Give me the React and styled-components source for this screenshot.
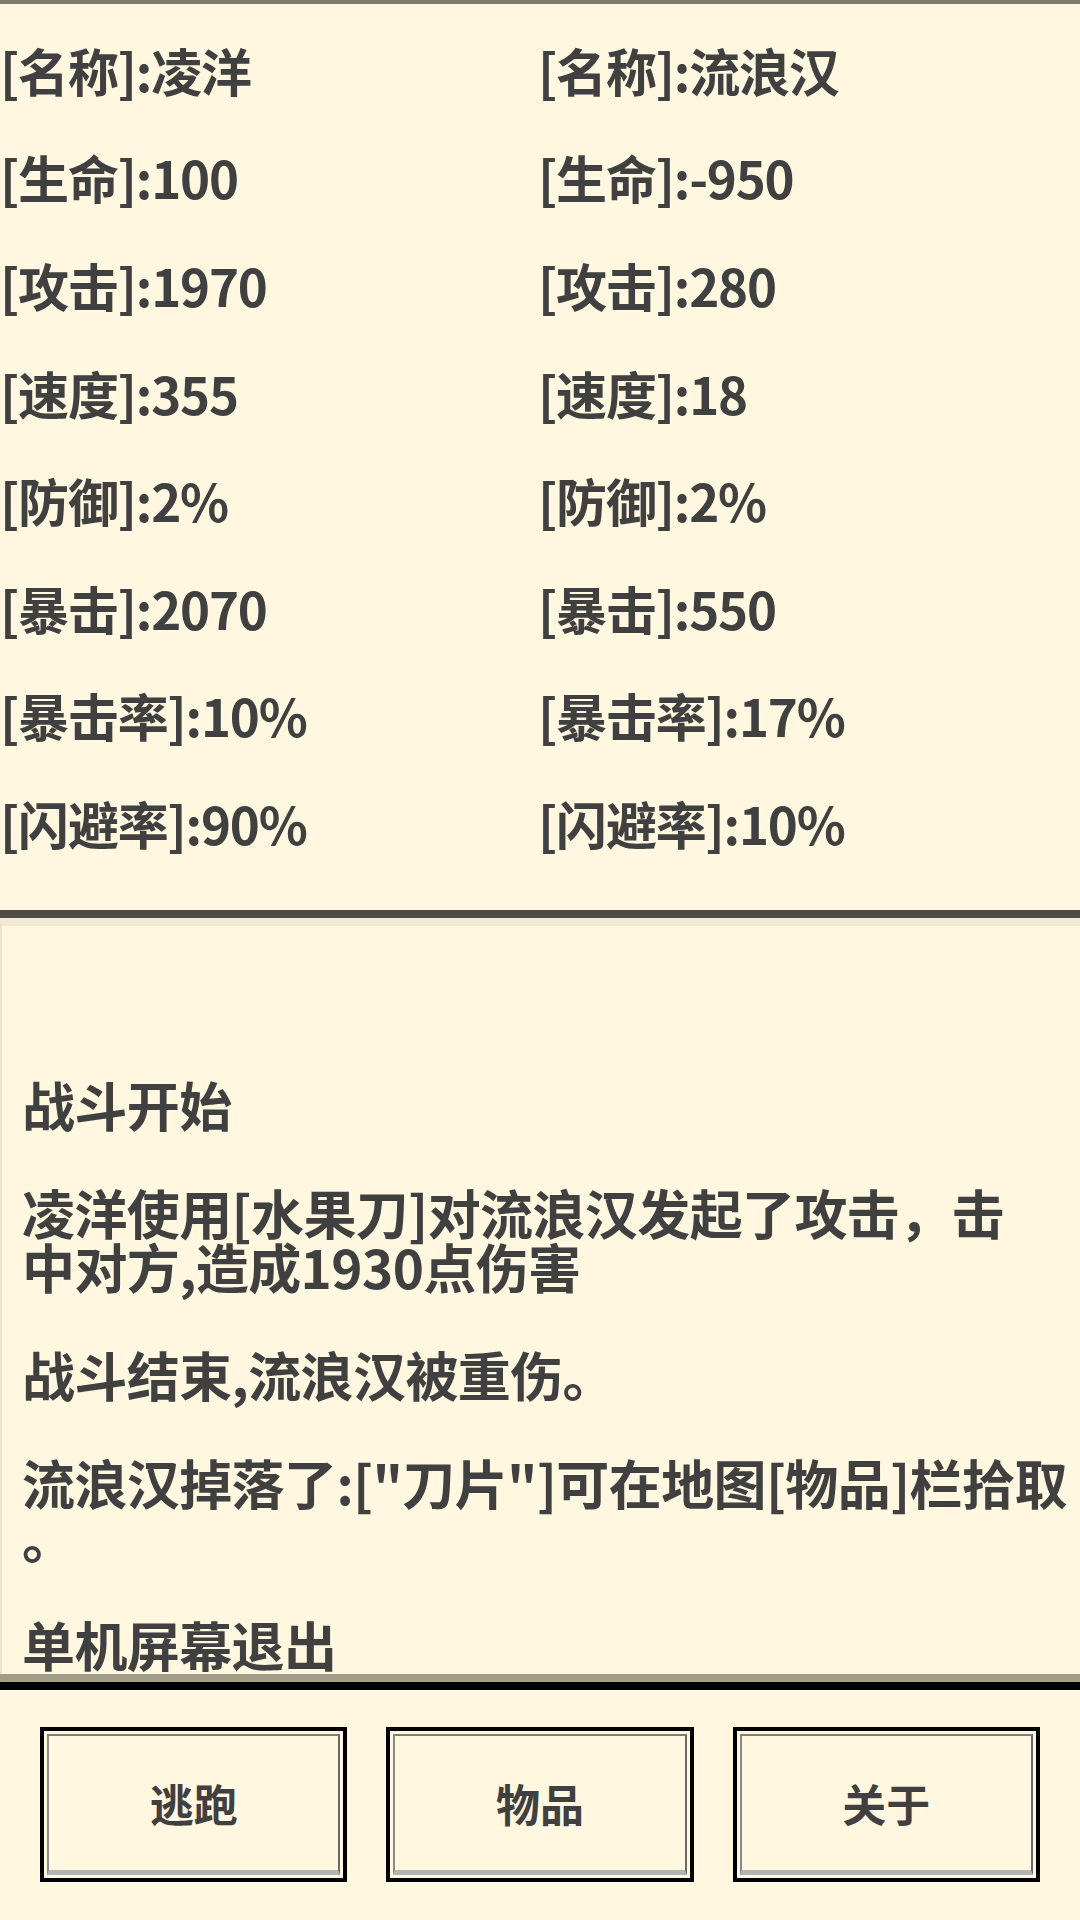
import React from 'react';
import styled, { createGlobalStyle } from 'styled-components';

const GlobalStyle = createGlobalStyle`
  html, body {
    margin: 0;
    padding: 0;
    background: #fff7e0;
  }
  body {
    font-family: "Noto Sans CJK SC", "Noto Sans", sans-serif;
    color: #404040;
  }
`;

const Page = styled.div`
  width: 1080px;
  height: 1920px;
  display: flex;
  flex-direction: column;
  background: #fff7e0;
  overflow: hidden;
`;

const TopBar = styled.div`
  height: 4px;
  background: #7f7b6c;
`;

// two columns: player on the left, enemy on the right
const StatsPanel = styled.div`
  display: grid;
  grid-template-columns: 538px 1fr;
  grid-auto-rows: 107.6px;
  align-items: center;
  padding: 12px 0 33px 0;
`;

const StatLine = styled.div`
  font-size: 51px;
  font-weight: 700;
  white-space: nowrap;
  letter-spacing: -1.2px;
`;

const Divider = styled.div`
  height: 8px;
  background: #4f4b40;
`;

const LogPanel = styled.div`
  flex: 1;
  overflow: hidden;
  border-top: 8px solid #f2ead3;
  border-left: 2px solid #ebe3cb;
  padding: 151px 20px 0 20px;
`;

const LogEntry = styled.p`
  margin: 0 0 54px 0;
  font-size: 53px;
  line-height: 54px;
  font-weight: 700;
  white-space: nowrap;
  letter-spacing: -0.6px;
`;

const BottomRule = styled.div`
  height: 8px;
  background: #a19b88;
  border-bottom: 8px solid #000;
`;

const ButtonBar = styled.div`
  height: 230px;
  display: flex;
  align-items: center;
  gap: 39px;
  padding: 0 40px 0 40px;
  box-sizing: border-box;
`;

const Button = styled.button`
  flex: 1;
  height: 155px;
  margin-top: -1px;
  border: 4px solid #000;
  background: #fff7e0;
  padding: 3px;
  box-sizing: border-box;
  display: flex;
  cursor: pointer;
`;

const ButtonFace = styled.span`
  flex: 1;
  display: flex;
  align-items: center;
  justify-content: center;
  border-top: 2px solid #7d7d7d;
  border-left: 2px solid #8a8a8a;
  border-right: 2px solid #6a6a6a;
  border-bottom: 5px solid #b3b3b3;
  font-family: "Noto Sans CJK SC", sans-serif;
  font-size: 44px;
  font-weight: 700;
  color: #404040;
`;

const player = [
  '[名称]:凌洋',
  '[生命]:100',
  '[攻击]:1970',
  '[速度]:355',
  '[防御]:2%',
  '[暴击]:2070',
  '[暴击率]:10%',
  '[闪避率]:90%',
];

const enemy = [
  '[名称]:流浪汉',
  '[生命]:-950',
  '[攻击]:280',
  '[速度]:18',
  '[防御]:2%',
  '[暴击]:550',
  '[暴击率]:17%',
  '[闪避率]:10%',
];

export default function App() {
  return (
    <>
      <GlobalStyle />
      <Page>
        <TopBar />
        <StatsPanel>
          {player.map((p, i) => (
            <React.Fragment key={i}>
              <StatLine>{p}</StatLine>
              <StatLine>{enemy[i]}</StatLine>
            </React.Fragment>
          ))}
        </StatsPanel>
        <Divider />
        <LogPanel>
          <LogEntry>战斗开始</LogEntry>
          <LogEntry>
            凌洋使用[水果刀]对流浪汉发起了攻击，击
            <br />
            中对方,造成1930点伤害
          </LogEntry>
          <LogEntry>战斗结束,流浪汉被重伤。</LogEntry>
          <LogEntry>
            流浪汉掉落了:["刀片"]可在地图[物品]栏拾取
            <br />。
          </LogEntry>
          <LogEntry>单机屏幕退出</LogEntry>
        </LogPanel>
        <BottomRule />
        <ButtonBar>
          <Button>
            <ButtonFace>逃跑</ButtonFace>
          </Button>
          <Button>
            <ButtonFace>物品</ButtonFace>
          </Button>
          <Button>
            <ButtonFace>关于</ButtonFace>
          </Button>
        </ButtonBar>
      </Page>
    </>
  );
}
